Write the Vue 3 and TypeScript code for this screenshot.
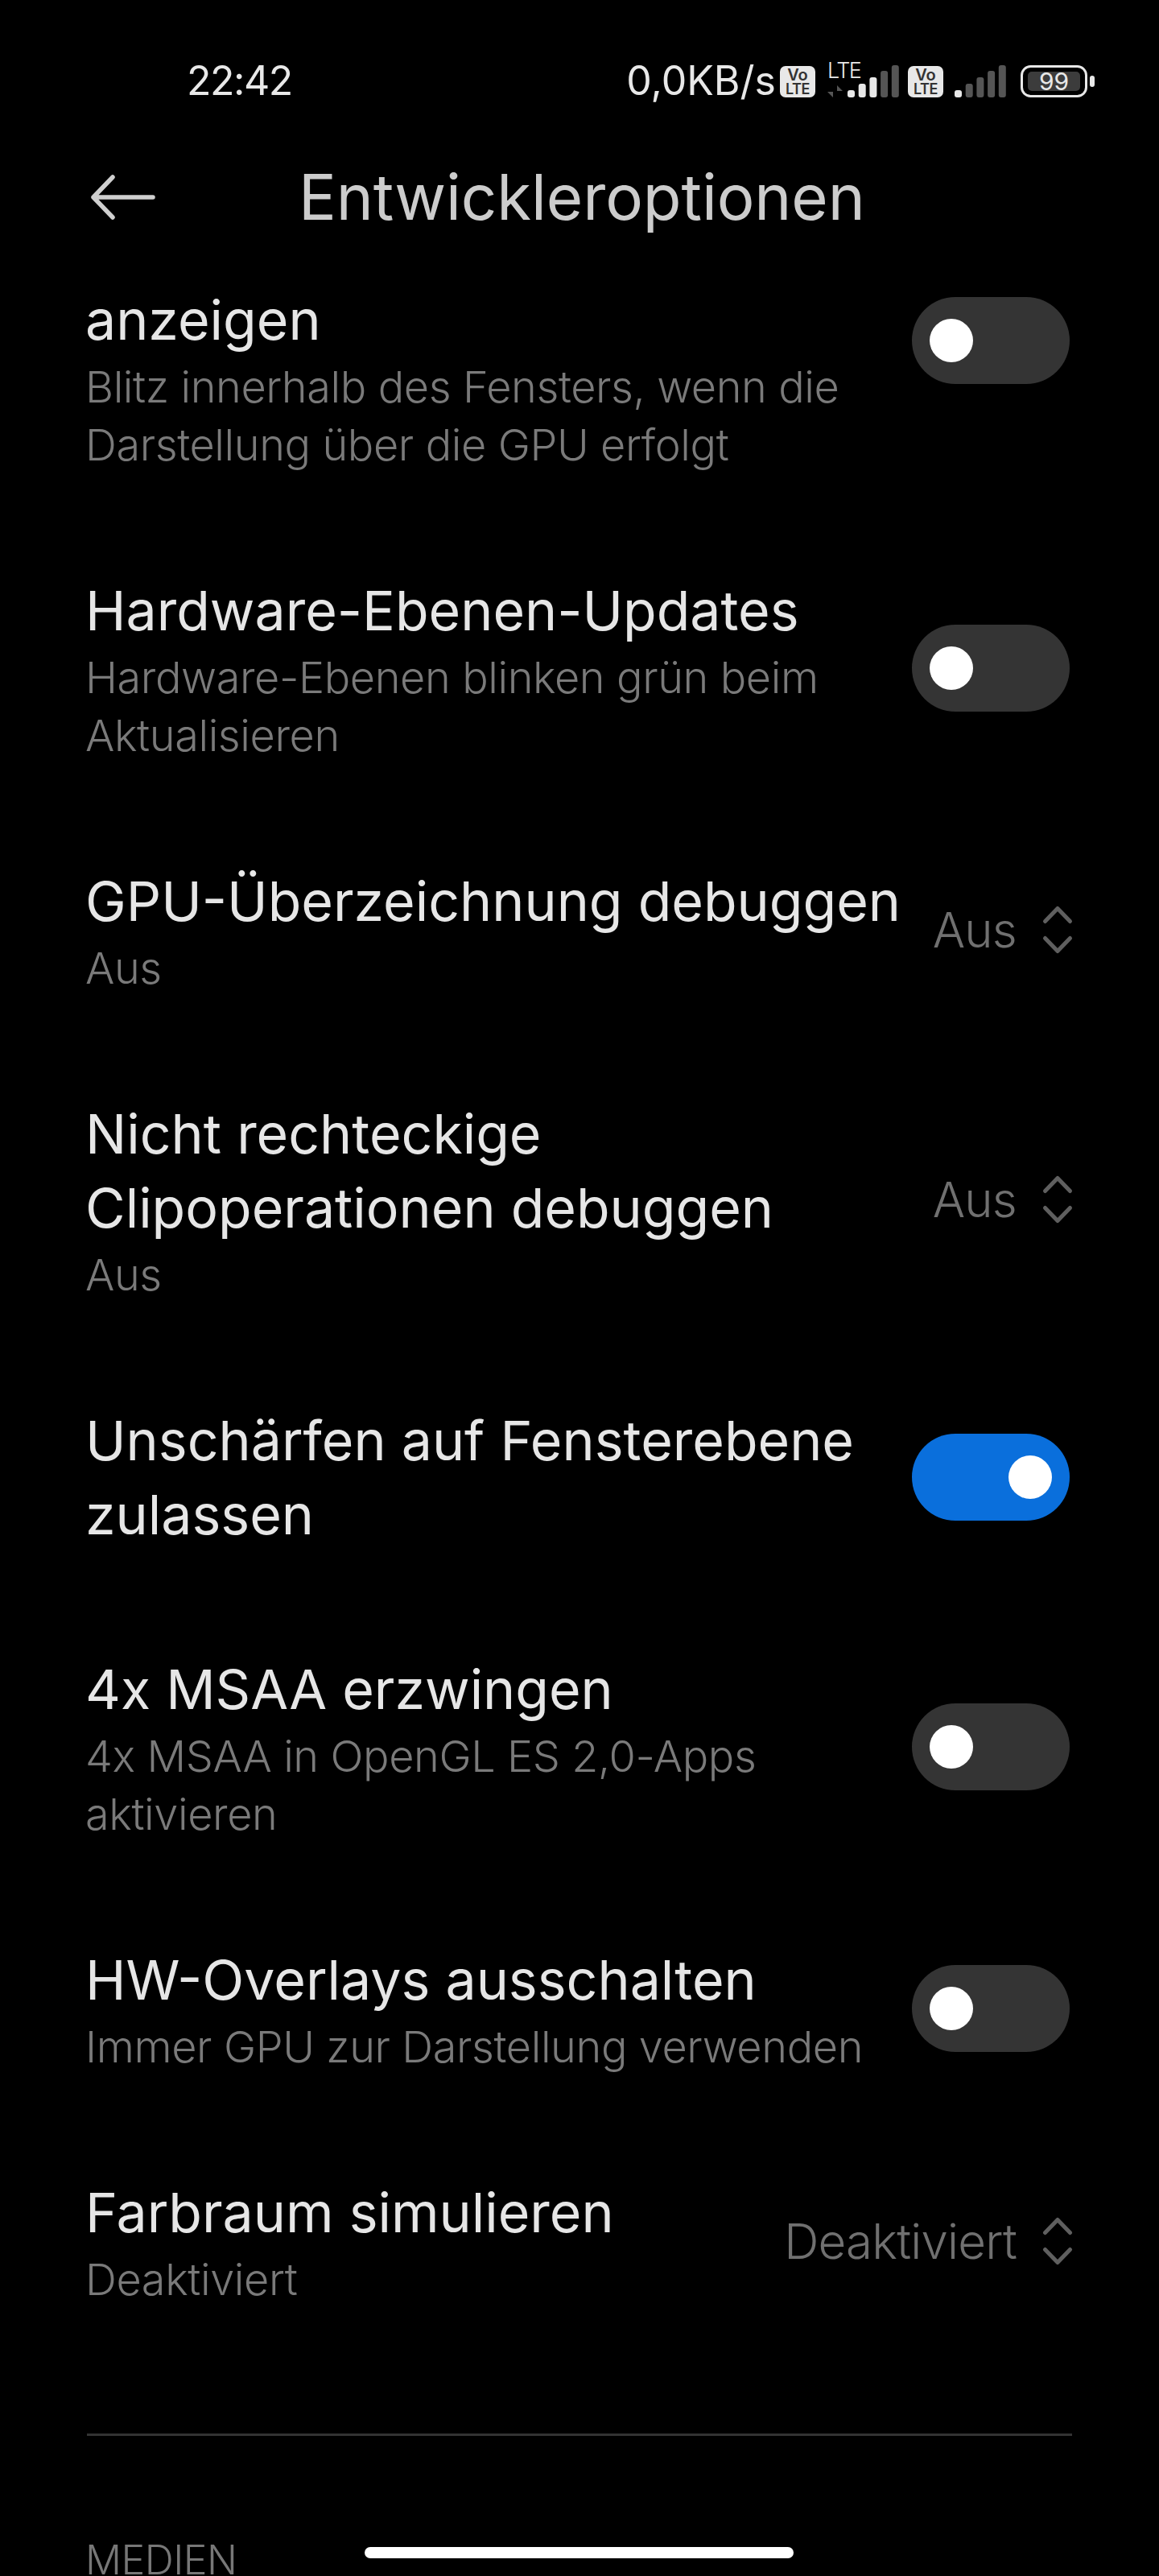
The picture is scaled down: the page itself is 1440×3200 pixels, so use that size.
<script setup lang="ts">
type Row = {
  title: string[];
  sub?: string[];
  toggle?: boolean;
  value?: string;
  clipped?: boolean;
};

const rows: Row[] = [
  {
    title: ["anzeigen"],
    sub: ["Blitz innerhalb des Fensters, wenn die", "Darstellung über die GPU erfolgt"],
    toggle: false,
    clipped: true,
  },
  {
    title: ["Hardware-Ebenen-Updates"],
    sub: ["Hardware-Ebenen blinken grün beim", "Aktualisieren"],
    toggle: false,
  },
  { title: ["GPU-Überzeichnung debuggen"], sub: ["Aus"], value: "Aus" },
  {
    title: ["Nicht rechteckige", "Clipoperationen debuggen"],
    sub: ["Aus"],
    value: "Aus",
  },
  { title: ["Unschärfen auf Fensterebene", "zulassen"], toggle: true },
  {
    title: ["4x MSAA erzwingen"],
    sub: ["4x MSAA in OpenGL ES 2,0-Apps", "aktivieren"],
    toggle: false,
  },
  {
    title: ["HW-Overlays ausschalten"],
    sub: ["Immer GPU zur Darstellung verwenden"],
    toggle: false,
  },
  { title: ["Farbraum simulieren"], sub: ["Deaktiviert"], value: "Deaktiviert" },
];

const bars = [
  { x: 0, h: 9 },
  { x: 13.7, h: 17 },
  { x: 27.4, h: 25 },
  { x: 41.1, h: 33 },
  { x: 54.8, h: 40 },
];
</script>

<template>
  <div class="page">
    <header class="top">
      <div class="status">
        <span class="time">22:42</span>
        <div class="status-right">
          <span class="speed">0,0KB/s</span>
          <svg class="volte" width="44" height="39" viewBox="0 0 44 39">
            <rect width="44" height="39" rx="7" fill="#e8e8e8" />
            <text x="22" y="18" text-anchor="middle" class="volte-vo">Vo</text>
            <text x="22" y="34.5" text-anchor="middle" class="volte-lte">LTE</text>
          </svg>
          <svg class="sim1" width="96" height="54" viewBox="0 0 96 54">
            <text x="0" y="30" class="lte-text">LTE</text>
            <path d="M7 39v15l-7-7h7zM12 39l7 7h-7v8z" fill="#555" />
            <rect
              v-for="(b, i) in bars"
              :key="i"
              :x="25 + b.x"
              :y="54 - b.h"
              width="9"
              :height="b.h"
              rx="3"
              :fill="i < 3 ? '#e8e8e8' : '#555'"
            />
          </svg>
          <svg class="volte2" width="44" height="39" viewBox="0 0 44 39">
            <rect width="44" height="39" rx="7" fill="#e8e8e8" />
            <text x="22" y="18" text-anchor="middle" class="volte-vo">Vo</text>
            <text x="22" y="34.5" text-anchor="middle" class="volte-lte">LTE</text>
          </svg>
          <svg class="sim2" width="65" height="40" viewBox="0 0 65 40">
            <rect
              v-for="(b, i) in bars"
              :key="i"
              :x="b.x"
              :y="40 - b.h"
              width="9"
              :height="b.h"
              rx="3"
              :fill="i < 1 ? '#e8e8e8' : '#555'"
            />
          </svg>
          <svg class="battery" width="92" height="40" viewBox="0 0 92 40">
            <rect x="1.5" y="1.5" width="80" height="37" rx="11" fill="none" stroke="#e8e8e8" stroke-width="3" />
            <rect x="9" y="8" width="65" height="24" rx="5" fill="#3c3c3c" />
            <text x="41.5" y="31" text-anchor="middle" class="battery-text">99</text>
            <rect x="86" y="13" width="6" height="14" rx="3" fill="#e8e8e8" />
          </svg>
        </div>
      </div>
      <div class="nav">
        <svg class="back" width="82" height="58" viewBox="0 0 82 58">
          <path
            d="M28 4L4 29L28 54M4 29H78"
            fill="none"
            stroke="#cfcfcf"
            stroke-width="5.5"
            stroke-linecap="round"
            stroke-linejoin="round"
          />
        </svg>
        <h1 class="heading">Entwickleroptionen</h1>
      </div>
    </header>

    <div class="list">
      <div
        v-for="row in rows"
        :key="row.title[0]"
        class="row"
        :class="{ clipped: row.clipped }"
      >
        <div class="text">
          <div v-for="line in row.title" :key="line" class="title">{{ line }}</div>
          <div v-for="line in row.sub" :key="line" class="sub">{{ line }}</div>
        </div>
        <div v-if="row.toggle !== undefined" class="toggle" :class="{ on: row.toggle }">
          <span class="knob"></span>
        </div>
        <div v-if="row.value" class="picker">
          <span class="value">{{ row.value }}</span>
          <svg class="chevrons" width="40" height="62" viewBox="0 0 40 62">
            <path
              d="M4.5 20.5L20 4.5L35.5 20.5M4.5 41.5L20 57.5L35.5 41.5"
              fill="none"
              stroke="#5f5f5f"
              stroke-width="5"
              stroke-linecap="round"
              stroke-linejoin="round"
            />
          </svg>
        </div>
      </div>
      <div class="divider"></div>
      <div class="section">MEDIEN</div>
    </div>
    <div class="home-bar"></div>
  </div>
</template>

<style scoped>
.page {
  position: relative;
  width: 1440px;
  height: 3200px;
  overflow: hidden;
  background: #000;
  font-family: Inter, "Liberation Sans", sans-serif;
}

.top {
  height: 345px;
  box-sizing: border-box;
  padding-top: 70px;
}

.status {
  display: flex;
  justify-content: space-between;
  align-items: flex-start;
  height: 60px;
  padding: 0 80px 0 232px;
}

.time {
  font-size: 50px;
  line-height: 60px;
  letter-spacing: -1.5px;
  color: #e8e8e8;
}

.status-right {
  display: flex;
  align-items: flex-start;
}

.speed {
  font-size: 50px;
  line-height: 60px;
  color: #e8e8e8;
}

.volte {
  margin: 12px 0 0 5px;
}

.sim1 {
  margin: -3px 0 0 15px;
}

.volte2 {
  margin: 12px 0 0 4px;
}

.sim2 {
  margin: 11px 0 0 14px;
}

.battery {
  margin: 11px 0 0 17px;
}

.volte-vo {
  font-size: 20px;
  font-weight: 600;
  fill: #333;
}

.volte-lte {
  font-size: 18px;
  font-weight: 600;
  letter-spacing: -0.5px;
  fill: #333;
}

.lte-text {
  font-size: 27px;
  font-weight: 300;
  letter-spacing: -1.5px;
  fill: #e8e8e8;
}

.battery-text {
  font-size: 30px;
  fill: #e8e8e8;
}

.nav {
  display: flex;
  align-items: center;
  margin-top: 65px;
  padding-left: 112px;
}

.heading {
  margin: 0 0 0 177px;
  font-size: 78px;
  font-weight: 400;
  line-height: 100px;
  letter-spacing: -0.1px;
  color: #cccccc;
}

.list {
  height: 2855px;
  overflow: hidden;
  padding: 0 108px;
}

.row {
  display: flex;
  align-items: center;
  justify-content: space-between;
  padding: 62.5px 0;
}

.row.clipped {
  margin-top: -149px;
}

.row.clipped .title {
  padding-top: 92px;
}

.text {
  margin-left: -2px;
}

.title {
  font-size: 68px;
  line-height: 92px;
  color: #e6e6e6;
}

.sub {
  padding-top: 2px;
  margin-bottom: -2px;
  font-size: 54px;
  font-weight: 300;
  line-height: 72px;
  letter-spacing: -0.4px;
  color: #7a7a7a;
}

.toggle {
  display: flex;
  align-items: center;
  flex-shrink: 0;
  width: 196px;
  height: 108px;
  box-sizing: border-box;
  margin-right: 3px;
  padding: 0 22px;
  border-radius: 54px;
  background: #343434;
}

.toggle.on {
  justify-content: flex-end;
  background: #0a6fdc;
}

.knob {
  width: 54px;
  height: 54px;
  border-radius: 50%;
  background: #fff;
}

.picker {
  display: flex;
  align-items: center;
  flex-shrink: 0;
  margin-right: -2px;
}

.value {
  font-size: 60px;
  font-weight: 300;
  line-height: 72px;
  letter-spacing: -0.8px;
  color: #707070;
}

.chevrons {
  margin-left: 31px;
}

.divider {
  height: 3px;
  margin-top: 95px;
  background: #333;
}

.section {
  margin-top: 134px;
  margin-left: -2px;
  font-size: 50px;
  font-weight: 300;
  line-height: 40px;
  letter-spacing: -0.5px;
  color: #777;
}

.home-bar {
  position: absolute;
  left: 453px;
  top: 3164px;
  width: 533px;
  height: 14px;
  border-radius: 7px;
  background: #fff;
}
</style>
